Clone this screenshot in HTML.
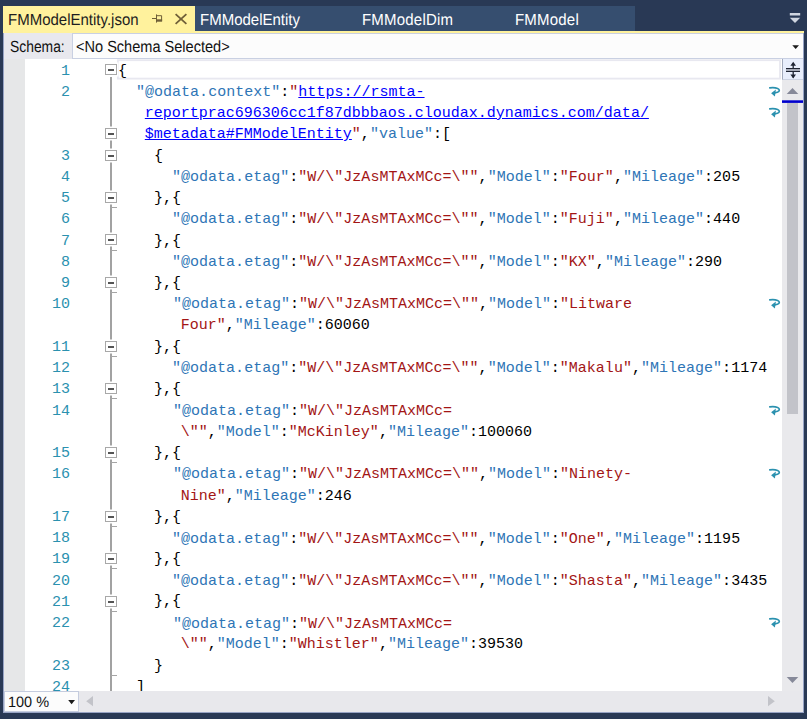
<!DOCTYPE html><html><head><meta charset="utf-8"><title>FMModelEntity.json</title><style>
html,body{margin:0;padding:0}
body{width:807px;height:719px;overflow:hidden;background:#293955;position:relative;font-family:"Liberation Sans",sans-serif;}
.abs{position:absolute}
#tabs{left:195px;top:6px;width:440px;height:25px;background:#364e6f}
#yl{left:3px;top:31px;width:801px;height:2px;background:#fff29d}
#atab{left:3px;top:6px;width:192px;height:27px;background:#fff29d}
.tt{position:absolute;top:8px;height:25px;line-height:25px;font-size:16.1px;white-space:pre;transform:scaleX(.932);transform-origin:0 0;text-rendering:geometricPrecision}
#schema{left:3px;top:33px;width:801px;height:26px;background:#e8e8ee}
#combo{left:72px;top:33px;width:732px;height:26px;background:#fcfcfc;border:1.5px solid #c9d0e2;box-sizing:border-box}
#ed{left:3px;top:59px;width:801px;height:632px;background:#fff;overflow:hidden}
#margin{left:0;top:0;width:22px;height:632px;background:#e6e7e8}
.row{position:absolute;left:0;height:21.25px;line-height:21.25px;font-family:"Liberation Mono",monospace;font-size:15px;white-space:pre;color:#000}
.ln{position:absolute;top:0;left:30px;width:37px;text-align:right;color:#2b91af}
.tx{position:absolute;top:0}
.k{color:#2e75b6}.s{color:#a31515}.p{color:#000}.l{color:#0000ff;text-decoration:underline}
.fb{position:absolute;left:102px;width:9.5px;height:9px;border:1px solid #a8a8a8;background:#fff;box-shadow:0 0 0 1.5px #fff}
.fb i{position:absolute;left:2px;top:4px;width:6px;height:1.7px;background:#555}
.tick{position:absolute;left:108px;width:5.5px;height:1px;background:#a5a5a5}
#fline{left:107.4px;top:18px;width:1.5px;height:620px;background:#a2a2a2}
#vs{left:779px;top:0;width:22px;height:632px;background:#e9e9ec}
#hs{left:3px;top:691px;width:801px;height:22px;background:#e8e8ec}
</style></head><body>
<div id="tabs" class="abs"></div><div id="yl" class="abs"></div><div id="atab" class="abs"></div>
<div class="tt" style="left:8px;color:#1e1e1e">FMModelEntity.json</div>
<div class="tt" style="left:200px;color:#fff">FMModelEntity</div>
<div class="tt" style="left:361.5px;color:#fff;letter-spacing:0.22px">FMModelDim</div>
<div class="tt" style="left:514.5px;color:#fff;letter-spacing:0.22px">FMModel</div>
<svg class="abs" style="left:150px;top:12px" width="40" height="14" viewBox="150 12 40 14"><g stroke="#6f5f38" fill="none"><path d="M152 18.5H156.5" stroke-width="1"/><path d="M156.5 14.4V22.6" stroke-width="1"/><path d="M157 15.7H161.6V21" stroke-width="1"/><path d="M157 20.5H162.1" stroke-width="2.4"/><path d="M175.6 14.2L186.4 23.8M186.4 14.2L175.6 23.8" stroke-width="1.8"/></g></svg>
<svg class="abs" style="left:788px;top:11px" width="14" height="14" viewBox="788 11 14 14"><rect x="789.8" y="13" width="10.4" height="2.5" fill="#d0d6e0"/><path d="M789.8 17.7H800.2L795 22.9Z" fill="#d0d6e0"/></svg>
<div id="schema" class="abs"></div><div id="combo" class="abs"></div>
<div class="abs" style="left:9.5px;top:35px;height:24px;line-height:24px;font-size:16.1px;color:#111;white-space:pre;text-rendering:geometricPrecision;transform:scaleX(.861);transform-origin:0 0">Schema:</div>
<div class="abs" style="left:75.5px;top:35px;height:24px;line-height:24px;font-size:16.1px;color:#111;white-space:pre;text-rendering:geometricPrecision;transform:scaleX(.904);transform-origin:0 0">&lt;No Schema Selected&gt;</div>
<svg class="abs" style="left:790px;top:43px" width="12" height="8" viewBox="790 43 12 8"><path d="M792.3 45.2H799L795.65 49Z" fill="#1b1b1b"/></svg>
<div id="ed" class="abs">
<div id="margin" class="abs"></div>
<svg class="abs" style="left:113px;top:0" width="667" height="22" viewBox="116 59 667 22"><rect x="117.9" y="60.2" width="662.1" height="18.4" fill="#fff" stroke="#e8e8f0" stroke-width="1.8"/></svg>
<div id="fline" class="abs"></div>
<div class="row" style="top:1.5px">
<span class="ln">1</span>
<span class="fb" style="top:3.5px"><i></i></span>
<span class="tx" style="left:115px;letter-spacing:.015px"><span class="p">{</span></span>
</div>
<div class="row" style="top:22.75px">
<span class="ln">2</span>
<span class="tx" style="left:133px;letter-spacing:.015px"><span class="k">"@odata.context"</span><span class="p">:</span><span class="s">"</span><span class="l">https://rsmta-</span></span>
<svg class="abs" style="left:765px;top:4px" width="14" height="13" viewBox="0 0 14 13"><path d="M1.8 1.9C4 1.6 7.3 1.6 9.6 2.5C12 3.6 11.8 5.6 9.5 6.3C8.6 6.6 7.8 6.7 7 6.8" fill="none" stroke="#2b91af" stroke-width="1.7" stroke-linecap="round"/><path d="M3.1 7.2L7.9 3.6L6.9 10.6Z" fill="#2b91af"/></svg>
</div>
<div class="row" style="top:44px">
<span class="tx" style="left:141.8px"><span class="l">reportprac696306cc1f87dbbbaos.cloudax.dynamics.com/data/</span></span>
<svg class="abs" style="left:765px;top:4px" width="14" height="13" viewBox="0 0 14 13"><path d="M1.8 1.9C4 1.6 7.3 1.6 9.6 2.5C12 3.6 11.8 5.6 9.5 6.3C8.6 6.6 7.8 6.7 7 6.8" fill="none" stroke="#2b91af" stroke-width="1.7" stroke-linecap="round"/><path d="M3.1 7.2L7.9 3.6L6.9 10.6Z" fill="#2b91af"/></svg>
</div>
<div class="row" style="top:65.25px">
<span class="fb" style="top:3.75px"><i></i></span>
<span class="tx" style="left:141.8px"><span class="l">$metadata#FMModelEntity</span><span class="s">"</span><span class="p">,</span><span class="k">"value"</span><span class="p">:[</span></span>
</div>
<div class="row" style="top:86.5px">
<span class="ln">3</span>
<span class="fb" style="top:4.5px"><i></i></span>
<span class="tx" style="left:151px;letter-spacing:.015px"><span class="p">{</span></span>
</div>
<div class="row" style="top:107.75px">
<span class="ln">4</span>
<span class="tx" style="left:169px;letter-spacing:.015px"><span class="k">"@odata.etag"</span><span class="p">:</span><span class="s">"W/\"JzAsMTAxMCc=\""</span><span class="p">,</span><span class="k">"Model"</span><span class="p">:</span><span class="s">"Four"</span><span class="p">,</span><span class="k">"Mileage"</span><span class="p">:205</span></span>
</div>
<div class="row" style="top:129px">
<span class="ln">5</span>
<span class="fb" style="top:4px"><i></i></span>
<span class="tick" style="top:19px"></span>
<span class="tx" style="left:151px;letter-spacing:.015px"><span class="p">},{</span></span>
</div>
<div class="row" style="top:150.25px">
<span class="ln">6</span>
<span class="tx" style="left:169px;letter-spacing:.015px"><span class="k">"@odata.etag"</span><span class="p">:</span><span class="s">"W/\"JzAsMTAxMCc=\""</span><span class="p">,</span><span class="k">"Model"</span><span class="p">:</span><span class="s">"Fuji"</span><span class="p">,</span><span class="k">"Mileage"</span><span class="p">:440</span></span>
</div>
<div class="row" style="top:171.5px">
<span class="ln">7</span>
<span class="fb" style="top:3.5px"><i></i></span>
<span class="tick" style="top:19px"></span>
<span class="tx" style="left:151px;letter-spacing:.015px"><span class="p">},{</span></span>
</div>
<div class="row" style="top:192.75px">
<span class="ln">8</span>
<span class="tx" style="left:169px;letter-spacing:.015px"><span class="k">"@odata.etag"</span><span class="p">:</span><span class="s">"W/\"JzAsMTAxMCc=\""</span><span class="p">,</span><span class="k">"Model"</span><span class="p">:</span><span class="s">"KX"</span><span class="p">,</span><span class="k">"Mileage"</span><span class="p">:290</span></span>
</div>
<div class="row" style="top:214px">
<span class="ln">9</span>
<span class="fb" style="top:4px"><i></i></span>
<span class="tick" style="top:19px"></span>
<span class="tx" style="left:151px;letter-spacing:.015px"><span class="p">},{</span></span>
</div>
<div class="row" style="top:235.25px">
<span class="ln">10</span>
<span class="tx" style="left:169.9px"><span class="k">"@odata.etag"</span><span class="p">:</span><span class="s">"W/\"JzAsMTAxMCc=\""</span><span class="p">,</span><span class="k">"Model"</span><span class="p">:</span><span class="s">"Litware</span></span>
<svg class="abs" style="left:765px;top:4px" width="14" height="13" viewBox="0 0 14 13"><path d="M1.8 1.9C4 1.6 7.3 1.6 9.6 2.5C12 3.6 11.8 5.6 9.5 6.3C8.6 6.6 7.8 6.7 7 6.8" fill="none" stroke="#2b91af" stroke-width="1.7" stroke-linecap="round"/><path d="M3.1 7.2L7.9 3.6L6.9 10.6Z" fill="#2b91af"/></svg>
</div>
<div class="row" style="top:256.5px">
<span class="tx" style="left:177.8px;top:-1px"><span class="s">Four"</span><span class="p">,</span><span class="k">"Mileage"</span><span class="p">:60060</span></span>
</div>
<div class="row" style="top:277.75px">
<span class="ln">11</span>
<span class="fb" style="top:4.25px"><i></i></span>
<span class="tick" style="top:19px"></span>
<span class="tx" style="left:151px;letter-spacing:.015px"><span class="p">},{</span></span>
</div>
<div class="row" style="top:299px">
<span class="ln">12</span>
<span class="tx" style="left:169px;letter-spacing:.015px"><span class="k">"@odata.etag"</span><span class="p">:</span><span class="s">"W/\"JzAsMTAxMCc=\""</span><span class="p">,</span><span class="k">"Model"</span><span class="p">:</span><span class="s">"Makalu"</span><span class="p">,</span><span class="k">"Mileage"</span><span class="p">:1174</span></span>
</div>
<div class="row" style="top:320.25px">
<span class="ln">13</span>
<span class="fb" style="top:3.75px"><i></i></span>
<span class="tick" style="top:19px"></span>
<span class="tx" style="left:151px;letter-spacing:.015px"><span class="p">},{</span></span>
</div>
<div class="row" style="top:341.5px">
<span class="ln">14</span>
<span class="tx" style="left:169.9px"><span class="k">"@odata.etag"</span><span class="p">:</span><span class="s">"W/\"JzAsMTAxMCc=</span></span>
<svg class="abs" style="left:765px;top:4px" width="14" height="13" viewBox="0 0 14 13"><path d="M1.8 1.9C4 1.6 7.3 1.6 9.6 2.5C12 3.6 11.8 5.6 9.5 6.3C8.6 6.6 7.8 6.7 7 6.8" fill="none" stroke="#2b91af" stroke-width="1.7" stroke-linecap="round"/><path d="M3.1 7.2L7.9 3.6L6.9 10.6Z" fill="#2b91af"/></svg>
</div>
<div class="row" style="top:362.75px">
<span class="tx" style="left:177.8px"><span class="s">\""</span><span class="p">,</span><span class="k">"Model"</span><span class="p">:</span><span class="s">"McKinley"</span><span class="p">,</span><span class="k">"Mileage"</span><span class="p">:100060</span></span>
</div>
<div class="row" style="top:384px">
<span class="ln">15</span>
<span class="fb" style="top:4px"><i></i></span>
<span class="tick" style="top:19px"></span>
<span class="tx" style="left:151px;letter-spacing:.015px"><span class="p">},{</span></span>
</div>
<div class="row" style="top:405.25px">
<span class="ln">16</span>
<span class="tx" style="left:169.9px"><span class="k">"@odata.etag"</span><span class="p">:</span><span class="s">"W/\"JzAsMTAxMCc=\""</span><span class="p">,</span><span class="k">"Model"</span><span class="p">:</span><span class="s">"Ninety-</span></span>
<svg class="abs" style="left:765px;top:4px" width="14" height="13" viewBox="0 0 14 13"><path d="M1.8 1.9C4 1.6 7.3 1.6 9.6 2.5C12 3.6 11.8 5.6 9.5 6.3C8.6 6.6 7.8 6.7 7 6.8" fill="none" stroke="#2b91af" stroke-width="1.7" stroke-linecap="round"/><path d="M3.1 7.2L7.9 3.6L6.9 10.6Z" fill="#2b91af"/></svg>
</div>
<div class="row" style="top:426.5px">
<span class="tx" style="left:177.8px"><span class="s">Nine"</span><span class="p">,</span><span class="k">"Mileage"</span><span class="p">:246</span></span>
</div>
<div class="row" style="top:447.75px">
<span class="ln">17</span>
<span class="fb" style="top:4.25px"><i></i></span>
<span class="tick" style="top:19px"></span>
<span class="tx" style="left:151px;letter-spacing:.015px"><span class="p">},{</span></span>
</div>
<div class="row" style="top:469px">
<span class="ln">18</span>
<span class="tx" style="left:169px;letter-spacing:.015px;top:1px"><span class="k">"@odata.etag"</span><span class="p">:</span><span class="s">"W/\"JzAsMTAxMCc=\""</span><span class="p">,</span><span class="k">"Model"</span><span class="p">:</span><span class="s">"One"</span><span class="p">,</span><span class="k">"Mileage"</span><span class="p">:1195</span></span>
</div>
<div class="row" style="top:490.25px">
<span class="ln">19</span>
<span class="fb" style="top:3.75px"><i></i></span>
<span class="tick" style="top:19px"></span>
<span class="tx" style="left:151px;letter-spacing:.015px"><span class="p">},{</span></span>
</div>
<div class="row" style="top:511.5px">
<span class="ln">20</span>
<span class="tx" style="left:169px;letter-spacing:.015px"><span class="k">"@odata.etag"</span><span class="p">:</span><span class="s">"W/\"JzAsMTAxMCc=\""</span><span class="p">,</span><span class="k">"Model"</span><span class="p">:</span><span class="s">"Shasta"</span><span class="p">,</span><span class="k">"Mileage"</span><span class="p">:3435</span></span>
</div>
<div class="row" style="top:532.75px">
<span class="ln">21</span>
<span class="fb" style="top:4.25px"><i></i></span>
<span class="tick" style="top:19px"></span>
<span class="tx" style="left:151px;letter-spacing:.015px;top:-1px"><span class="p">},{</span></span>
</div>
<div class="row" style="top:554px">
<span class="ln">22</span>
<span class="tx" style="left:169.9px;top:1px"><span class="k">"@odata.etag"</span><span class="p">:</span><span class="s">"W/\"JzAsMTAxMCc=</span></span>
<svg class="abs" style="left:765px;top:4px" width="14" height="13" viewBox="0 0 14 13"><path d="M1.8 1.9C4 1.6 7.3 1.6 9.6 2.5C12 3.6 11.8 5.6 9.5 6.3C8.6 6.6 7.8 6.7 7 6.8" fill="none" stroke="#2b91af" stroke-width="1.7" stroke-linecap="round"/><path d="M3.1 7.2L7.9 3.6L6.9 10.6Z" fill="#2b91af"/></svg>
</div>
<div class="row" style="top:575.25px">
<span class="tx" style="left:177.8px"><span class="s">\""</span><span class="p">,</span><span class="k">"Model"</span><span class="p">:</span><span class="s">"Whistler"</span><span class="p">,</span><span class="k">"Mileage"</span><span class="p">:39530</span></span>
</div>
<div class="row" style="top:596.5px">
<span class="ln">23</span>
<span class="tick" style="top:19px"></span>
<span class="tx" style="left:151px;letter-spacing:.015px"><span class="p">}</span></span>
</div>
<div class="row" style="top:617.75px">
<span class="ln">24</span>
<span class="tx" style="left:133px;letter-spacing:.015px"><span class="p">]</span></span>
</div>
<div id="vs" class="abs">
<div class="abs" style="left:0;top:0;width:20px;height:20px;background:#e8eefc;border-left:1px solid #a3abbd;border-bottom:1px solid #ccd3e2"></div>
<svg class="abs" style="left:0;top:0" width="21" height="632" viewBox="782 59 21 632"><path d="M793.2 63V77.5" stroke="#1e2433" stroke-width="1.3" fill="none"/><path d="M790.4 65.7L793.2 61.7L796 65.7ZM790.4 74.5L793.2 78.5L796 74.5Z" fill="#1e2433"/><rect x="786" y="68" width="14" height="4" fill="#b4b9c6"/><rect x="786" y="68" width="14" height="1.1" fill="#1e2433"/><rect x="786" y="70.9" width="14" height="1.1" fill="#1e2433"/><path d="M786.7 93.9H798.3L792.5 87.9Z" fill="#868999"/><rect x="782" y="100.3" width="21" height="2.6" fill="#0000cd"/><rect x="787" y="103" width="11" height="311" fill="#c2c3c9"/><path d="M786.7 677H798.3L792.5 683Z" fill="#868999"/></svg>
</div>
</div>
<div id="hs" class="abs">
<div class="abs" style="left:1px;top:0;width:73px;height:19px;border:1.5px solid #c5ccde;background:#fcfcfc"></div>
<div class="abs" style="left:4.5px;top:1.3px;height:22px;line-height:22px;font-size:15px;color:#111;white-space:pre;text-rendering:geometricPrecision;transform:scaleX(.965);transform-origin:0 0">100 %</div>
<svg class="abs" style="left:0;top:0" width="801" height="22" viewBox="3 691 801 22"><path d="M68.2 700H75L71.6 704.2Z" fill="#1b1b1b"/><path d="M93 696V706.3L86.2 701.15Z" fill="#c2c3c9"/><path d="M768 696V706.3L774.8 701.15Z" fill="#c2c3c9"/></svg>
</div>
<div class="abs" style="left:3px;top:33px;width:801px;height:680px;box-sizing:border-box;border:1px solid #97a3c4;border-top:0;pointer-events:none"></div>
</body></html>
